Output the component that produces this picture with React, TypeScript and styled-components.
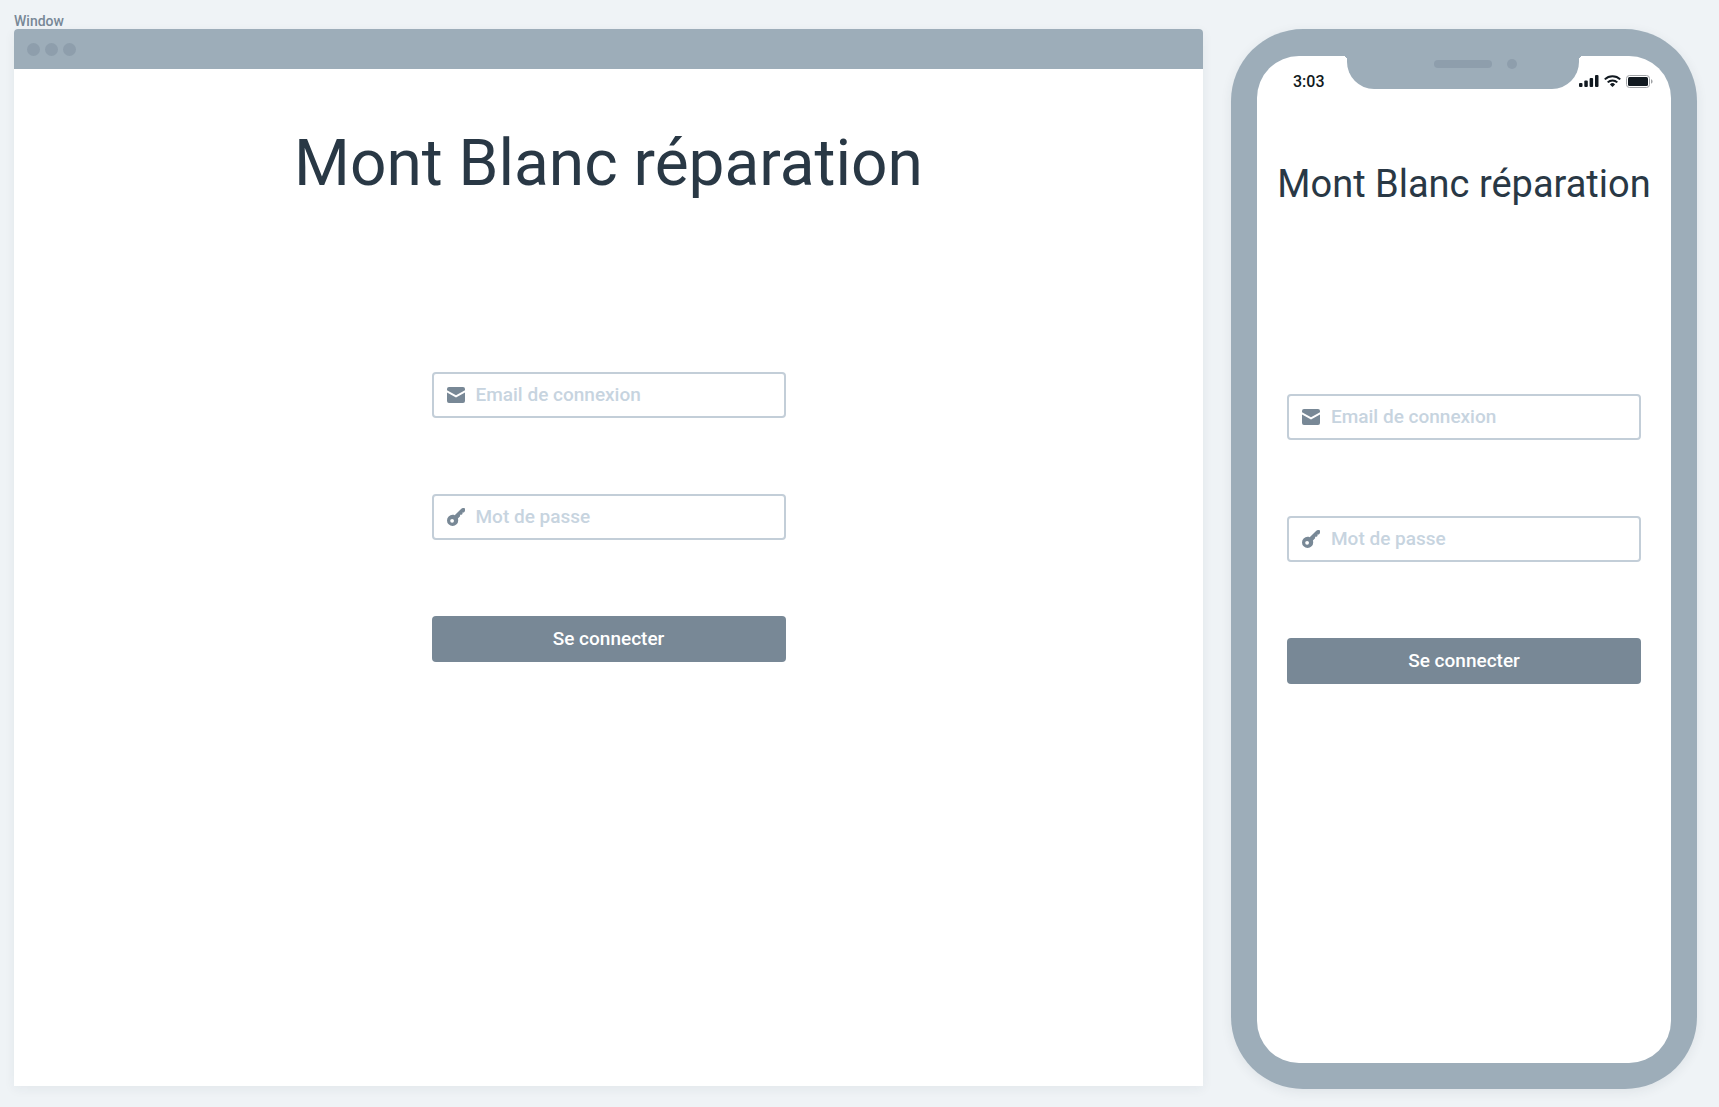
import React from "react";
import styled, { createGlobalStyle } from "styled-components";

const color = {
  canvas: "#eff3f6",
  frame: "#9dadb9",
  frameDetail: "#8e9eac",
  slate: "#788896",
  line: "#c3ced8",
  placeholder: "#c7d4df",
  heading: "#293845",
  ink: "#111920",
  white: "#ffffff",
};

const GlobalStyle = createGlobalStyle`
  *, *::before, *::after { box-sizing: border-box; }
  body {
    margin: 0;
    background: ${color.canvas};
    font-family: Roboto, "Liberation Sans", sans-serif;
  }
`;

const Canvas = styled.main`
  display: grid;
  grid-template-columns: minmax(0, 1fr) 466px;
  grid-template-rows: 16px minmax(0, 1fr);
  column-gap: 28px;
  min-height: 100vh;
  padding: 13px 22px 18px 14px;
`;

const FrameLabel = styled.div`
  grid-column: 1 / -1;
  font-size: 14px;
  line-height: 16px;
  font-weight: 500;
  color: ${color.slate};
`;

const BrowserWindow = styled.section`
  display: flex;
  flex-direction: column;
  margin-bottom: 3px;
  background: ${color.white};
  border-radius: 4px 4px 0 0;
  box-shadow: 0 3px 12px rgba(41, 56, 69, 0.06);
`;

const TitleBar = styled.div`
  display: flex;
  align-items: center;
  gap: 5px;
  height: 40px;
  padding: 0 13px;
  background: ${color.frame};
  border-radius: 4px 4px 0 0;
`;

const Dot = styled.span<{ $size: number }>`
  width: ${(p) => p.$size}px;
  height: ${(p) => p.$size}px;
  border-radius: 50%;
  background: ${color.frameDetail};
`;

const Content = styled.div<{ $top: number; $gap: number }>`
  display: flex;
  flex-direction: column;
  align-items: center;
  gap: ${(p) => p.$gap}px;
  padding-top: ${(p) => p.$top}px;
`;

const Heading = styled.h1<{ $size: number; $line: number }>`
  margin: 0;
  font-size: ${(p) => p.$size}px;
  line-height: ${(p) => p.$line}px;
  font-weight: 400;
  color: ${color.heading};
  white-space: nowrap;
`;

const Form = styled.form`
  display: flex;
  flex-direction: column;
  gap: 76px;
  width: 354px;
`;

const Field = styled.label`
  display: flex;
  align-items: center;
  gap: 11px;
  height: 46px;
  padding: 0 13px;
  border: 2px solid ${color.line};
  border-radius: 4px;
  background: ${color.white};
  color: ${color.slate};

  svg { flex: none; }
`;

const Input = styled.input`
  flex: 1;
  min-width: 0;
  padding: 0;
  border: 0;
  outline: 0;
  background: transparent;
  font: 500 19px/24px Roboto, "Liberation Sans", sans-serif;
  color: ${color.heading};

  &::placeholder { color: ${color.placeholder}; opacity: 1; }
`;

const SubmitButton = styled.button`
  height: 46px;
  padding: 0;
  border: 0;
  border-radius: 4px;
  background: ${color.slate};
  color: ${color.white};
  font: 500 19px/24px Roboto, "Liberation Sans", sans-serif;
  cursor: pointer;
`;

const Phone = styled.section`
  display: flex;
  padding: 27px 26px 26px;
  border-radius: 72px;
  background: ${color.frame};
  box-shadow: 0 3px 12px rgba(41, 56, 69, 0.08);
`;

const Screen = styled.div`
  flex: 1;
  min-width: 0;
  border-radius: 42px;
  background: ${color.white};
`;

const StatusBar = styled.div`
  display: grid;
  grid-template-columns: 1fr 232px 1fr;
  height: 33px;
`;

const Time = styled.time`
  align-self: end;
  padding-left: 36px;
  font-size: 16px;
  line-height: 14px;
  font-weight: 500;
  color: ${color.ink};
`;

const Notch = styled.div`
  position: relative;
  display: flex;
  justify-content: flex-end;
  align-items: flex-start;
  gap: 15px;
  padding: 3px 62px 0 0;
  border-radius: 0 0 27px 27px;
  background: ${color.frame};

  &::before,
  &::after {
    content: "";
    position: absolute;
    top: 0;
    width: 4px;
    height: 4px;
  }
  &::before {
    right: 100%;
    background: radial-gradient(circle at 0 100%, transparent 4px, ${color.frame} 4px);
  }
  &::after {
    left: 100%;
    background: radial-gradient(circle at 100% 100%, transparent 4px, ${color.frame} 4px);
  }
`;

const Speaker = styled.span`
  width: 58px;
  height: 8px;
  margin-top: 1px;
  border-radius: 4px;
  background: ${color.frameDetail};
`;

const StatusIcons = styled.div`
  display: flex;
  align-items: center;
  justify-content: flex-end;
  align-self: end;
  gap: 5px;
  height: 16px;
  padding-right: 18px;
  color: ${color.ink};
`;

const MailIcon = () => (
  <svg width="18" height="16" viewBox="0 0 18 16" fill="currentColor" aria-hidden="true">
    <path d="M2 0h14a2 2 0 0 1 2 2v1.200L9 8.300 0 3.200V2a2 2 0 0 1 2-2z" />
    <path d="M0 5.600l9 5 9-5V14a2 2 0 0 1-2 2H2a2 2 0 0 1-2-2z" />
  </svg>
);

const KeyIcon = () => (
  <svg width="18" height="18" viewBox="0 0 18 18" fill="currentColor" aria-hidden="true">
    <path
      fillRule="evenodd"
      d="M14.300.700C14.800.200 15.300 0 16 0h1a1 1 0 0 1 1 1v1.600c0 .5-.2.900-.5 1.200l-.6.600h-1.400v1.500l-.9.900h-1.500v1.500l-2.200 2.200c.2.600.3 1.200.3 1.900A5.600 5.600 0 1 1 5.600 6.800c.8 0 1.400.1 2.100.4zM5.100 10.900a1.900 1.900 0 1 0 0 3.800 1.900 1.900 0 0 0 0-3.800z"
    />
  </svg>
);

const SignalIcon = () => (
  <svg width="20" height="12" viewBox="0 0 20 12" fill="currentColor" aria-hidden="true">
    <rect x="0" y="8" width="3.500" height="4" rx="1" />
    <rect x="5.300" y="5.500" width="3.500" height="6.500" rx="1" />
    <rect x="10.600" y="3" width="3.500" height="9" rx="1" />
    <rect x="16" y="0" width="3.500" height="12" rx="1" />
  </svg>
);

const WifiIcon = () => (
  <svg width="17" height="12" viewBox="0 0 17 12" fill="none" stroke="currentColor" strokeWidth="2" aria-hidden="true">
    <path d="M.8 4.400a11 11 0 0 1 15.400 0" />
    <path d="M3.700 7.400a6.800 6.800 0 0 1 9.600 0" />
    <path d="M5.900 9.400a3.700 3.700 0 0 1 5.200 0L8.500 12z" fill="currentColor" stroke="none" />
  </svg>
);

const BatteryIcon = () => (
  <svg width="27" height="13" viewBox="0 0 27 13" aria-hidden="true">
    <rect x=".5" y=".5" width="23" height="12" rx="3" fill="none" stroke="#a0a3a6" />
    <rect x="2" y="2" width="20" height="9" rx="1.500" fill="currentColor" />
    <path d="M25 4.300c1 .4 1.600 1.200 1.600 2.200S26 8.300 25 8.700z" fill="#a0a3a6" />
  </svg>
);

const LoginForm = ({ prefix }: { prefix: string }) => (
  <Form onSubmit={(event) => event.preventDefault()}>
    <Field htmlFor={`${prefix}-email`}>
      <MailIcon />
      <Input id={`${prefix}-email`} type="email" placeholder="Email de connexion" aria-label="Email de connexion" />
    </Field>
    <Field htmlFor={`${prefix}-password`}>
      <KeyIcon />
      <Input id={`${prefix}-password`} type="password" placeholder="Mot de passe" aria-label="Mot de passe" />
    </Field>
    <SubmitButton type="submit">Se connecter</SubmitButton>
  </Form>
);

export default function App() {
  return (
    <>
      <GlobalStyle />
      <Canvas>
        <FrameLabel>Window</FrameLabel>
        <BrowserWindow>
          <TitleBar>
            <Dot $size={13} />
            <Dot $size={13} />
            <Dot $size={13} />
          </TitleBar>
          <Content $top={57} $gap={170}>
            <Heading $size={64} $line={76}>Mont Blanc réparation</Heading>
            <LoginForm prefix="desktop" />
          </Content>
        </BrowserWindow>
        <Phone>
          <Screen>
            <StatusBar>
              <Time>3:03</Time>
              <Notch>
                <Speaker />
                <Dot $size={10} />
              </Notch>
              <StatusIcons>
                <SignalIcon />
                <WifiIcon />
                <BatteryIcon />
              </StatusIcons>
            </StatusBar>
            <Content $top={73} $gap={188}>
              <Heading $size={38} $line={44}>Mont Blanc réparation</Heading>
              <LoginForm prefix="mobile" />
            </Content>
          </Screen>
        </Phone>
      </Canvas>
    </>
  );
}
